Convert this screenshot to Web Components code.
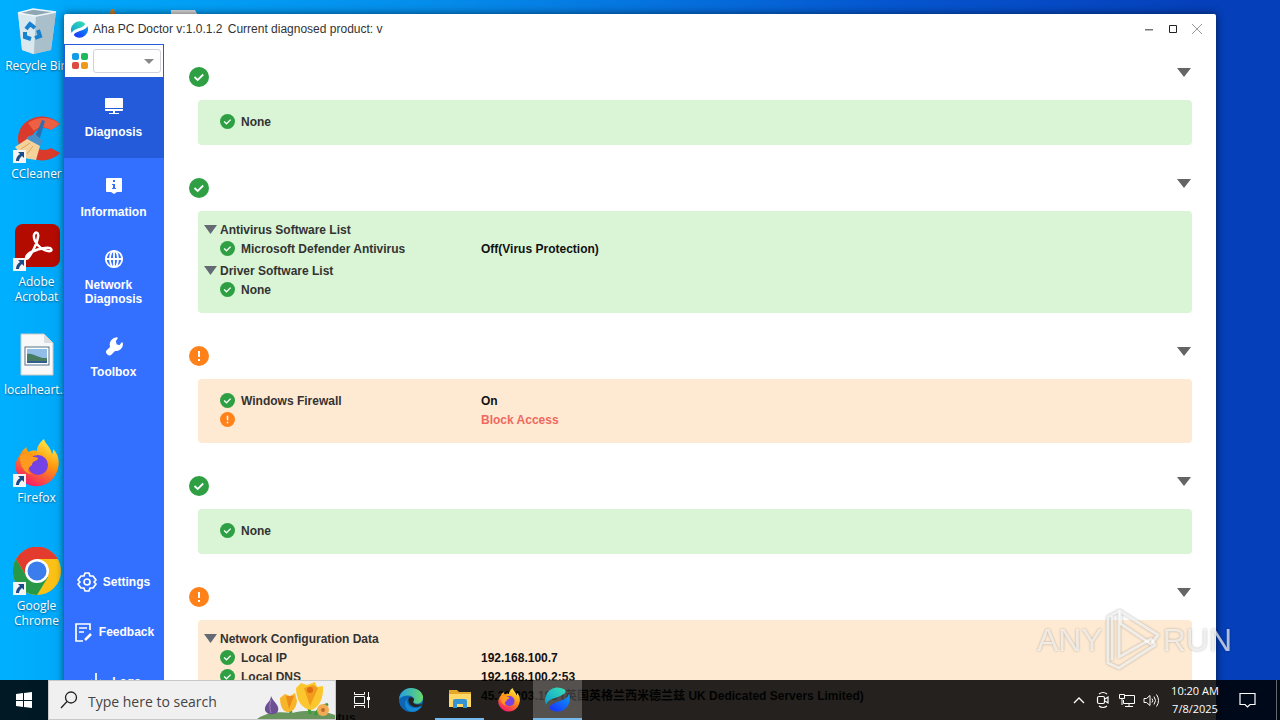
<!DOCTYPE html>
<html lang="en">
<head>
<meta charset="utf-8">
<meta name="viewport" content="width=device-width, initial-scale=1">
<title>Aha PC Doctor</title>
<style>
    html, body {
        height: 100%;
        margin: 0;
        overflow: hidden;
        font-family: "Liberation Sans", "Noto Sans CJK SC", Arial, sans-serif;
        font-size: 12px;
    }
</style>
</head>
<body>
<desk-top>
    <desk-shortcut label="Recycle Bin" plain>
        <svg width="48" height="48" viewBox="0 0 48 48">
            <path d="M5 6l15-4 23 3-5 38-18 4-11-4z" fill="#b9d3e0"/>
            <path d="M5 6l18 3-2 38-12-4z" fill="#d9e7ee"/><path d="M23 9l20-4-5 38-17 4z" fill="#a9bfca"/>
            <path d="M5 6l15-4 23 3-20 4z" fill="#8ea7b3" stroke="#edf6fa" stroke-width="1.500"/>
            <g fill="none" stroke="#1682d0" stroke-width="4"><path d="M13 22l4-5 5 4"/><path d="M25 23l2 6-5 2"/><path d="M18 32l-6-2 0-5"/></g>
        </svg>
    </desk-shortcut>
    <desk-shortcut label="CCleaner">
        <svg width="48" height="48" viewBox="0 0 48 48">
            <path d="M47 9A24 22 0 1 0 47 38l-9-5a12 11 0 1 1 0-18z" fill="#d93a2b"/>
            <path d="M47 9a24 22 0 0 0-32-1l6 8a12 11 0 0 1 17-1z" fill="#ee6044"/>
            <path d="M29 5l3 1-6 20-5-2z" fill="#2f6fae"/><path d="M14 22l8-3 8 7-3 5-14-4z" fill="#4a90c8"/>
            <path d="M2 32l12-8 13 7-4 14-12-2z" fill="#f6d29b"/><path d="M8 34l9-6M14 39l6-8" stroke="#d9a765"/>
        </svg>
    </desk-shortcut>
    <desk-shortcut label="Adobe Acrobat" wrap>
        <svg width="48" height="48" viewBox="0 0 48 48">
            <rect x="2" y="1" width="45" height="43" rx="8" fill="#b30b00"/>
            <path d="M13 35c0-5 11-9 19-10 8-1 8 4 3 3-7-1-15-9-14-16 1-4 5-3 4 2-1 7-7 18-10 21-1 1-2 1-2 0z" fill="none" stroke="#fff" stroke-width="2.500"/>
        </svg>
    </desk-shortcut>
    <desk-shortcut label="localheart..." plain>
        <svg width="48" height="48" viewBox="0 0 48 48">
            <path d="M8 3h23l9 9v32H8z" fill="#f8f8f8" stroke="#c9c9c9"/><path d="M31 3v9h9z" fill="#d9dde0"/>
            <rect x="12" y="16" width="24" height="18" fill="#fff" stroke="#54738c"/>
            <path d="M14 18h20v14H14z" fill="#92bde7"/><path d="M14 23c6-2 12 5 20 4v5H14z" fill="#477c61"/><path d="M14 30h20v2H14z" fill="#325d8c"/>
        </svg>
    </desk-shortcut>
    <desk-shortcut label="Firefox">
        <svg width="48" height="48" viewBox="0 0 48 48">
            <defs><linearGradient id="ff" x1=".8" y1="0" x2=".3" y2="1"><stop offset="0" stop-color="#fff44f"/><stop offset=".45" stop-color="#ff980e"/><stop offset="1" stop-color="#f5156c"/></linearGradient></defs>
            <path d="M31 0c-6 5-7 9-7 12-4-1-7 0-8 1-2-1-3-3-2-5-4 2-6 5-7 8C2 22 1 29 5 36a21 21 0 0 0 36 2c7-10 6-22-1-28 0 3 0 4-1 5-1-7-7-10-8-15z" fill="url(#ff)"/>
            <circle cx="25" cy="26" r="10" fill="#7542e5"/>
            <path d="M7 17c6-4 9-1 13 1 5 0 6 1 4 3-2 1-5 2-5 5-5 3-5 7 0 9-6 1-13-8-12-18z" fill="#ff9a1f"/>
        </svg>
    </desk-shortcut>
    <desk-shortcut label="Google Chrome" wrap>
        <svg width="48" height="48" viewBox="0 0 48 48">
            <circle cx="24" cy="24" r="24" fill="#fbc116"/>
            <path d="M3 12a24 24 0 0 1 42 0H24L14 30z" fill="#e33b2e"/>
            <path d="M3 12a24 24 0 0 0 21 36l11-18H14z" fill="#279847"/>
            <circle cx="24" cy="24" r="12" fill="#fff"/><circle cx="24" cy="24" r="9.500" fill="#3b7ded"/>
        </svg>
    </desk-shortcut>

    <doctor-window slot="window" heading="Aha PC Doctor v:1.0.1.2" product="Current diagnosed product: v">
        <side-bar slot="side">
            <side-item label="Diagnosis" active>
                <svg width="20" height="20" viewBox="0 0 20 20" fill="#fff"><path d="M2 2h16a1 1 0 0 1 1 1v9H1V3a1 1 0 0 1 1-1zM1 13h18v1a1 1 0 0 1-1 1H2a1 1 0 0 1-1-1zM9 15h2v2h4v1H5v-1h4z"/></svg>
            </side-item>
            <side-item label="Information">
                <svg width="20" height="20" viewBox="0 0 20 20"><path d="M3 2h14a1 1 0 0 1 1 1v12a1 1 0 0 1-1 1h-4l-3 2-3-2H3a1 1 0 0 1-1-1V3a1 1 0 0 1 1-1z" fill="#fff"/><path d="M9 4h2v2H9zM8 8h3v4h1v1H8v-1h1V9H8z" fill="#3370ff"/></svg>
            </side-item>
            <side-item label="Network Diagnosis">
                <svg width="20" height="20" viewBox="0 0 20 20" fill="none" stroke="#fff" stroke-width="1.800"><circle cx="10" cy="10" r="8.200"/><ellipse cx="10" cy="10" rx="4" ry="8.200"/><path d="M2 10h16M10 2v16"/></svg>
            </side-item>
            <side-item label="Toolbox">
                <svg width="20" height="20" viewBox="0 0 20 20" fill="#fff"><path d="M13 2l-2 3 1 4 4 1 2-3c1 4-3 8-7 7l-4 4c-2 2-5-1-4-3l4-4C5 6 9 2 13 2z" stroke="#fff" stroke-width="1.500" stroke-linejoin="round"/></svg>
            </side-item>
            <side-item label="Settings" slot="foot" inline>
                <svg width="20" height="20" viewBox="0 0 20 20" fill="none" stroke="#fff" stroke-width="1.700" stroke-linejoin="round"><path d="M8 1h4l1 3 3 0 3 4-2 2 2 2-3 4-3 0-1 3H8l-1-3-3 0-3-4 2-2-2-2 3-4 3 0z"/><circle cx="10" cy="10" r="3"/></svg>
            </side-item>
            <side-item label="Feedback" slot="foot" inline>
                <svg width="20" height="20" viewBox="0 0 20 20" fill="none" stroke="#fff" stroke-width="1.700"><path d="M17 8V2H3v17h7M6 6h8M6 10h5"/><path d="M12 18l6-6" stroke-width="2.500"/></svg>
            </side-item>
            <side-item label="Logs" slot="foot" inline>
                <svg width="20" height="20" viewBox="0 0 20 20" fill="none" stroke="#fff" stroke-width="1.700"><path d="M10 1v12M5 8l5 5 5-5M2 14v4h16v-4"/></svg>
            </side-item>
        </side-bar>

        <check-section status="ok">
            <check-list><check-row status="ok" label="None"></check-row></check-list>
        </check-section>
        <check-section status="ok">
            <check-list heading="Antivirus Software List">
                <check-row status="ok" label="Microsoft Defender Antivirus" value="Off(Virus Protection)"></check-row>
            </check-list>
            <check-list heading="Driver Software List">
                <check-row status="ok" label="None"></check-row>
            </check-list>
        </check-section>
        <check-section status="warn">
            <check-list>
                <check-row status="ok" label="Windows Firewall" value="On"></check-row>
                <check-row status="warn" value="Block Access"></check-row>
            </check-list>
        </check-section>
        <check-section status="ok">
            <check-list><check-row status="ok" label="None"></check-row></check-list>
        </check-section>
        <check-section status="warn">
            <check-list heading="Network Configuration Data">
                <check-row status="ok" label="Local IP" value="192.168.100.7"></check-row>
                <check-row status="ok" label="Local DNS" value="192.168.100.2:53"></check-row>
                <check-row status="ok" value="45.38.203.183 (英国英格兰西米德兰兹 UK Dedicated Servers Limited)"></check-row>
            </check-list>
            <check-list heading="Network Adapter Status"></check-list>
        </check-section>
    </doctor-window>

    <any-run-mark slot="mark"></any-run-mark>
    <task-bar slot="taskbar"></task-bar>
</desk-top>

<script>
const ahaLogo = (size) => `
    <svg width="${size}" height="${size}" viewBox="0 0 24 24" aria-hidden="true">
        <defs>
            <linearGradient id="a" x1="0" y1="1" x2="1" y2="0"><stop offset="0" stop-color="#0a9fd0"/><stop offset="1" stop-color="#3be0b4"/></linearGradient>
            <linearGradient id="b" x1="0" y1="1" x2="1" y2="0"><stop offset="0" stop-color="#1a2cff"/><stop offset="1" stop-color="#0a9df5"/></linearGradient>
        </defs>
        <path d="M1 17A12 12 0 0 1 18 2c3 2 2 4-2 6C11 11 3 11 1 17z" fill="url(#a)"/>
        <path d="M23 7A12 12 0 0 1 6 22c-3-2-2-4 2-6 5-3 13-3 15-9z" fill="url(#b)"/>
    </svg>`;

const statusIcon = (status, size) => status === 'warn'
    ? `<svg width="${size}" height="${size}" viewBox="0 0 20 20" role="img" aria-label="warning"><circle cx="10" cy="10" r="10" fill="#ff811a"/><path d="M9 5h2v6H9zM9 13h2v2H9z" fill="#fff"/></svg>`
    : `<svg width="${size}" height="${size}" viewBox="0 0 20 20" role="img" aria-label="ok"><circle cx="10" cy="10" r="10" fill="#2ea043"/><path d="M5.500 10l3.200 3 5.500-5.500" fill="none" stroke="#fff" stroke-width="1.800"/></svg>`;

class DeskTop extends HTMLElement {
    constructor() {
        super();
        this.attachShadow({ mode: 'open' });
        this.shadowRoot.innerHTML = `
            <style>
                :host {
                    display: block;
                    position: relative;
                    height: 100%;
                    overflow: hidden;
                    background:
                        linear-gradient(to right, #00b0ff 0, #00a8fa 5%, #058bea 35%, #0555cf 70%, #053fb9 95%);
                }
                .icons {
                    display: flex;
                    flex-direction: column;
                    width: 74px;
                }
                .peek {
                    position: absolute;
                    left: 104px;
                    top: 9px;
                }
                slot[name="window"]::slotted(*) {
                    position: absolute;
                    inset: 14px 64px 0 64px;
                }
                slot[name="mark"]::slotted(*) {
                    position: absolute;
                    right: 48px;
                    bottom: 48px;
                }
                slot[name="taskbar"]::slotted(*) {
                    position: absolute;
                    inset: auto 0 0 0;
                }
            </style>
            <svg class="peek" width="100" height="8" aria-hidden="true"><path d="M5 8l2-8h3l2 8z" fill="#d27a1c"/><path d="M67 8V1h24l4 7z" fill="#dcdcdc"/></svg>
            <div class="icons"><slot></slot></div>
            <slot name="window"></slot>
            <slot name="mark"></slot>
            <slot name="taskbar"></slot>
        `;
    }
}
customElements.define('desk-top', DeskTop);

class DeskShortcut extends HTMLElement {
    constructor() {
        super();
        this.attachShadow({ mode: 'open' });
        const arrow = this.hasAttribute('plain') ? '' : `
            <svg class="arrow" width="13" height="13" viewBox="0 0 13 13"><path d="M0 0h13v13H0z" fill="#f4f4f4"/><path d="M5 2h6v6L9 6c-2 2-3 3-3 5H3c0-3 1-5 4-7z" fill="#1c4c86"/></svg>`;
        this.shadowRoot.innerHTML = `
            <style>
                :host {
                    display: block;
                    height: 108px;
                }
                button {
                    display: flex;
                    flex-direction: column;
                    align-items: center;
                    gap: 3px;
                    width: 73px;
                    padding: 7px 0 0;
                    border: 0;
                    background: none;
                    color: #fff;
                    font: 12px/15px "Open Sans", "Noto Sans", sans-serif;
                    text-shadow: 0 1px 2px #0007;
                }
                .pic {
                    display: grid;
                }
                .arrow {
                    grid-area: 1 / 1;
                    place-self: end start;
                    z-index: 1;
                }
                ::slotted(svg) {
                    grid-area: 1 / 1;
                }
                :host([wrap]) .label {
                    max-width: 50px;
                }
            </style>
            <button type="button">
                <span class="pic"><slot></slot>${arrow}</span>
                <span class="label">${this.getAttribute('label')}</span>
            </button>
        `;
    }
}
customElements.define('desk-shortcut', DeskShortcut);

class DoctorWindow extends HTMLElement {
    constructor() {
        super();
        this.attachShadow({ mode: 'open' });
        this.shadowRoot.innerHTML = `
            <style>
                :host {
                    display: grid;
                    grid-template: 30px 1fr / 100px 1fr;
                    overflow: hidden;
                    border-radius: 2px 2px 0 0;
                    background: #fff;
                    color: #333;
                    box-shadow: 0 0 8px #0009;
                }
                header {
                    grid-column: 1 / -1;
                    display: flex;
                    align-items: center;
                    gap: 5px;
                    padding: 0 7px;
                }
                h1 {
                    flex: 1;
                    margin: 0;
                    font-size: 12px;
                    font-weight: normal;
                }
                h1 span {
                    margin-left: 2px;
                }
                .controls {
                    display: flex;
                }
                .controls button {
                    display: grid;
                    place-items: center;
                    width: 24px;
                    height: 24px;
                    padding: 0;
                    border: 0;
                    background: none;
                }
                main {
                    min-height: 0;
                    overflow: hidden;
                    padding: 23px 24px 0 25px;
                }
                slot[name="side"]::slotted(*) {
                    min-height: 0;
                }
            </style>
            <header>
                ${ahaLogo(17)}
                <h1>${this.getAttribute('heading')} <span>${this.getAttribute('product')}</span></h1>
                <div class="controls">
                    <button type="button" aria-label="Minimize"><svg width="10" height="10"><path d="M1 5h8v1.500H1z" fill="#777"/></svg></button>
                    <button type="button" aria-label="Maximize"><svg width="10" height="10"><path d="M1.500 1.500h7v7h-7z" fill="none" stroke="#222"/></svg></button>
                    <button type="button" aria-label="Close"><svg width="12" height="12"><path d="M1 1l10 10M11 1L1 11" stroke="#999"/></svg></button>
                </div>
            </header>
            <slot name="side"></slot>
            <main><slot></slot></main>
        `;
    }
}
customElements.define('doctor-window', DoctorWindow);

class SideBar extends HTMLElement {
    constructor() {
        super();
        this.attachShadow({ mode: 'open' });
        this.shadowRoot.innerHTML = `
            <style>
                :host {
                    display: flex;
                    flex-direction: column;
                    box-sizing: border-box;
                    padding-bottom: 13px;
                    background: #3370ff;
                }
                .pick {
                    display: flex;
                    align-items: center;
                    gap: 5px;
                    box-sizing: border-box;
                    height: 34px;
                    padding: 0 2px 0 7px;
                    border: 1px solid #245bdb;
                    background: #fff;
                }
                .box {
                    display: grid;
                    flex: 1;
                    align-items: center;
                }
                select {
                    grid-area: 1 / 1;
                    appearance: none;
                    width: 100%;
                    height: 24px;
                    border: 1px solid #d0d3d9;
                    border-radius: 3px;
                    background: #fff;
                }
                .box svg {
                    grid-area: 1 / 1;
                    justify-self: end;
                    margin-right: 7px;
                    pointer-events: none;
                }
                nav {
                    display: flex;
                    flex: 1;
                    flex-direction: column;
                }
                .foot {
                    margin-top: auto;
                }
            </style>
            <div class="pick">
                <svg width="16" height="16" viewBox="0 0 16 16" aria-hidden="true"><rect width="7" height="7" rx="2" fill="#129ce8"/><rect x="9" width="7" height="7" rx="2" fill="#1eb85d"/><rect y="9" width="7" height="7" rx="2" fill="#dc4b42"/><rect x="9" y="9" width="7" height="7" rx="2" fill="#eb9a1a"/></svg>
                <div class="box">
                    <select aria-label="Product"><option></option></select>
                    <svg width="10" height="5" aria-hidden="true"><path d="M0 0h10L5 5z" fill="#888"/></svg>
                </div>
            </div>
            <nav>
                <slot></slot>
                <div class="foot"><slot name="foot"></slot></div>
            </nav>
        `;
    }
}
customElements.define('side-bar', SideBar);

class SideItem extends HTMLElement {
    constructor() {
        super();
        this.attachShadow({ mode: 'open' });
        this.shadowRoot.innerHTML = `
            <style>
                :host {
                    display: block;
                    height: 80px;
                }
                :host([active]) {
                    background: #245bdb;
                }
                :host([inline]) {
                    height: 50px;
                }
                button {
                    display: flex;
                    flex-direction: column;
                    align-items: center;
                    justify-content: center;
                    gap: 9px;
                    width: 100%;
                    height: 100%;
                    padding: 0 1px 1px 0;
                    border: 0;
                    background: none;
                    color: #fff;
                    font: bold 12px/14px "Liberation Sans", Arial, sans-serif;
                    text-align: left;
                }
                :host([inline]) button {
                    flex-direction: row;
                    gap: 6px;
                }
                ::slotted(svg) {
                    flex: none;
                }
                .label {
                    width: min-content;
                }
            </style>
            <button type="button"><slot></slot><span class="label">${this.getAttribute('label')}</span></button>
        `;
    }
}
customElements.define('side-item', SideItem);

class CheckSection extends HTMLElement {
    constructor() {
        super();
        this.attachShadow({ mode: 'open' });
        this.shadowRoot.innerHTML = `
            <style>
                :host {
                    display: block;
                    margin-bottom: 33px;
                }
                .head {
                    display: flex;
                    align-items: flex-start;
                    justify-content: space-between;
                    height: 33px;
                }
                button {
                    display: grid;
                    padding: 1px;
                    border: 0;
                    background: none;
                }
                .panel {
                    display: flex;
                    flex-direction: column;
                    gap: 3px;
                    margin-left: 9px;
                    padding: 9px 6px 14px;
                    border-radius: 4px;
                    background: #d9f5d6;
                }
                :host([status="warn"]) .panel {
                    background: #feead2;
                }
            </style>
            <div class="head">
                ${statusIcon(this.getAttribute('status'), 20)}
                <button type="button" aria-label="Collapse"><svg width="14" height="9"><path d="M0 0h14L7 9z" fill="#646464"/></svg></button>
            </div>
            <div class="panel"><slot></slot></div>
        `;
    }
}
customElements.define('check-section', CheckSection);

class CheckList extends HTMLElement {
    constructor() {
        super();
        this.attachShadow({ mode: 'open' });
        const heading = this.getAttribute('heading');
        this.shadowRoot.innerHTML = `
            <style>
                :host {
                    display: block;
                }
                :host(:not([heading])) {
                    padding-top: 3px;
                }
                h2 {
                    display: flex;
                    align-items: center;
                    gap: 3px;
                    height: 19px;
                    margin: 0;
                    color: #333;
                    font-size: 12px;
                    line-height: 20px;
                }
            </style>
            ${heading ? `<h2><svg width="13" height="9" aria-hidden="true"><path d="M0 0h13L6.500 9z" fill="#646a73"/></svg><span>${heading}</span></h2>` : ''}
            <slot></slot>
        `;
    }
}
customElements.define('check-list', CheckList);

class CheckRow extends HTMLElement {
    constructor() {
        super();
        this.attachShadow({ mode: 'open' });
        const status = this.getAttribute('status');
        this.shadowRoot.innerHTML = `
            <style>
                :host {
                    display: grid;
                    grid-template: 19px / 16px 235px 1fr;
                    column-gap: 5px;
                    padding-left: 16px;
                    font-weight: bold;
                    line-height: 21px;
                    white-space: nowrap;
                }
                svg {
                    align-self: center;
                }
                .value {
                    color: #111;
                }
                :host([status="warn"]) .value {
                    color: #f0685f;
                }
            </style>
            ${statusIcon(status, 15)}
            <span>${this.getAttribute('label') || ''}</span>
            <span class="value">${this.getAttribute('value') || ''}</span>
        `;
    }
}
customElements.define('check-row', CheckRow);

class AnyRunMark extends HTMLElement {
    constructor() {
        super();
        this.attachShadow({ mode: 'open' });
        this.shadowRoot.innerHTML = `
            <style>
                :host {
                    display: flex;
                    align-items: center;
                    gap: 2px;
                    color: #ffffffb0;
                    font: 32px/64px "Liberation Sans", sans-serif;
                    filter: drop-shadow(0 0 1px #0006);
                    pointer-events: none;
                }
            </style>
            <span>ANY</span>
            <svg width="56" height="64" viewBox="0 0 56 64" fill="none" stroke="#ffffffc0" stroke-width="3" stroke-linejoin="round" aria-hidden="true"><path d="M15 3l38 24-7 9-30-20z"/><path d="M14 3v46l32-18 4 6-36 23-11-5V9z"/><path d="M7 8v44"/></svg>
            <span>RUN</span>
        `;
    }
}
customElements.define('any-run-mark', AnyRunMark);

class TaskBar extends HTMLElement {
    constructor() {
        super();
        this.attachShadow({ mode: 'open' });
        this.shadowRoot.innerHTML = `
            <style>
                :host {
                    display: flex;
                    height: 40px;
                    background: rgba(0, 0, 0, .86);
                    color: #fff;
                    font: 11px/18px "Open Sans", "Noto Sans", sans-serif;
                }
                button {
                    display: grid;
                    place-items: center;
                    box-sizing: border-box;
                    width: 49px;
                    padding: 0;
                    border: 0;
                    background: none;
                    color: inherit;
                    font: inherit;
                }
                .start {
                    width: 48px;
                }
                .apps {
                    display: flex;
                    padding-left: 1px;
                }
                .open {
                    border-bottom: 2px solid #76b9ed;
                }
                .active {
                    background: #ffffff38;
                }
                .search {
                    display: flex;
                    align-items: center;
                    box-sizing: border-box;
                    width: 288px;
                    padding-left: 11px;
                    border: 1px solid #c8c8c8;
                    background: #f0f0f0;
                }
                input {
                    flex: 1;
                    min-width: 0;
                    height: 22px;
                    margin-left: 10px;
                    padding: 2px 0 0;
                    border: 0;
                    background: none;
                    box-sizing: border-box;
                    font: 14px/20px "Open Sans", "Noto Sans", sans-serif;
                }
                input::placeholder {
                    color: #444;
                }
                .flowers {
                    align-self: flex-end;
                }
                .tray {
                    display: flex;
                    margin-left: auto;
                }
                .tray button {
                    width: 24px;
                }
                .tray .clock {
                    display: block;
                    width: 64px;
                }
                .tray .notes {
                    width: 40px;
                }
                .peek {
                    width: 3px;
                    margin-left: 9px;
                    border-left: 1px solid #666;
                }
            </style>
            <button class="start" type="button" aria-label="Start"><svg width="16" height="16" viewBox="0 0 16 16" fill="#fff"><path d="M0 2l7-1v7H0zM8 1l8-1v8H8zM0 9h7v6l-7-1zM8 9h8v7l-8-1z"/></svg></button>
            <label class="search">
                <svg width="18" height="18" viewBox="0 0 18 18" fill="none" stroke="#222" stroke-width="1.300" aria-hidden="true"><circle cx="11" cy="6.500" r="5.500"/><path d="M7 10.500L1 17"/></svg>
                <input type="text" placeholder="Type here to search" aria-label="Search">
                <svg class="flowers" width="78" height="37" viewBox="0 0 78 37" aria-hidden="true">
                    <path d="M0 37c12-8 24-7 35-6 16-4 32-2 43 2v4z" fill="#69965c"/>
                    <path d="M34 31c-1-7-5-8-8-6M53 32c0-9-5-10-9-13M58 33c4-8 9-9 13-11" stroke="#3b9b38" stroke-width="3" fill="none"/>
                    <path d="M14 14c2 6 9 9 7 15-2 5-12 4-13-1-1-6 6-8 6-14z" fill="#6d5094"/><path d="M14 18c-2 6-1 9 0 13" stroke="#a187bd" fill="none"/>
                    <path d="M23 16l5-4 5 2 5-3 2 8c-1 7-4 11-9 11s-8-6-8-14z" fill="#f9b52a"/><path d="M29 14l3 13 5-13z" fill="#ec8b1a"/>
                    <path d="M39 6l5-5 6 2 8-3 2 5 6-1c1 12-4 22-12 24-9-1-15-10-15-22z" fill="#fcc62f"/><path d="M47 6l6 18 8-18-5-3z" fill="#f29b1d"/><circle cx="53" cy="8" r="3" fill="#de6c13"/>
                    <circle cx="66" cy="28" r="6" fill="#f4ac54"/><circle cx="66" cy="28" r="2" fill="#bd6b2b"/>
                </svg>
            </label>
            <div class="apps">
                <button type="button" aria-label="Task view"><svg width="18" height="18" viewBox="0 0 18 18" fill="none" stroke="#fff"><path d="M1.500 5.500h10v7h-10zM1.500 1v2.500h10V1M1.500 17v-2.500h10V17M15.500 1v16"/><path d="M14 6h3v3h-3z" fill="#fff" stroke="none"/></svg></button>
                <button type="button" aria-label="Edge"><svg width="24" height="24" viewBox="0 0 24 24">
                    <defs><linearGradient id="e" x1="0" x2="1"><stop offset="0" stop-color="#249fe2"/><stop offset="1" stop-color="#67d86b"/></linearGradient></defs>
                    <circle cx="12" cy="12" r="12" fill="#0c66b5"/><path d="M0 11C1 4 6 0 12 0c8 0 13 6 12 11-1 4-5 6-9 4-2-1 1-2 0-4-1-4-9-5-15 0z" fill="url(#e)"/>
                    <path d="M9 10c-3 4 1 11 9 10l5-2c-3 5-8 7-13 5-5-3-5-10-1-13z" fill="#1689d5"/><path d="M10 10c-2 3 1 9 7 9 3 0 5-1 6-3-4 1-8 1-9-2l1-3c-1-2-4-2-5-1z" fill="#25231f"/></svg></button>
                <button class="open" type="button" aria-label="File Explorer"><svg width="22" height="20" viewBox="0 0 22 20"><path d="M0 1h8l2 2h12v5H0z" fill="#e6a829"/><path d="M0 5h22v13H0z" fill="#ffd868"/><path d="M4 19v-7q0-2 2-2h10q2 0 2 2v7h-4v-4H8v4z" fill="#3494d4"/></svg></button>
                <button type="button" aria-label="Firefox"><svg width="24" height="24" viewBox="0 0 48 48">
                    <defs><linearGradient id="f" x1=".8" y1="0" x2=".3" y2="1"><stop offset="0" stop-color="#fff44f"/><stop offset=".45" stop-color="#ff980e"/><stop offset="1" stop-color="#f5156c"/></linearGradient></defs>
                    <path d="M31 0c-6 5-7 9-7 12-4-1-7 0-8 1-2-1-3-3-2-5-4 2-6 5-7 8C2 22 1 29 5 36a21 21 0 0 0 36 2c7-10 6-22-1-28 0 3 0 4-1 5-1-7-7-10-8-15z" fill="url(#f)"/>
                    <circle cx="25" cy="26" r="10" fill="#7542e5"/><path d="M7 17c6-4 9-1 13 1 5 0 6 1 4 3-2 1-5 2-5 5-5 3-5 7 0 9-6 1-13-8-12-18z" fill="#ff9a1f"/></svg></button>
                <button class="open active" type="button" aria-label="Aha PC Doctor">${ahaLogo(25)}</button>
            </div>
            <div class="tray">
                <button type="button" aria-label="Show hidden icons"><svg width="12" height="8" fill="none" stroke="#fff" stroke-width="1.300"><path d="M1 7l5-5 5 5"/></svg></button>
                <button type="button" aria-label="Meet now"><svg width="14" height="18" viewBox="0 0 14 18" fill="none" stroke="#fff" stroke-width="1.200"><rect x="1.500" y="5.500" width="7" height="7" rx="1.500"/><path d="M9 8l3-2v6l-3-2M3 3q4-3 8 0M3 15q4 3 8 0"/></svg></button>
                <button type="button" aria-label="Network"><svg width="17" height="15" viewBox="0 0 17 15" fill="none" stroke="#fff"><path d="M6 2.500h9.500v8h-11V7M10 11v3M6 13.500h8M.500 1.500h5v4h-5zM3 6v6"/></svg></button>
                <button type="button" aria-label="Volume"><svg width="17" height="15" viewBox="0 0 17 15" fill="none" stroke="#fff"><path d="M1 5.500h2.500l3.500-3v10l-3.500-3H1zM9 5.500q1.500 2 0 4M11 3.500q3 4 0 8M13.500 1.500q4 6 0 12"/></svg></button>
                <button class="clock" type="button"><div>10:20 AM</div><div>7/8/2025</div></button>
                <button class="notes" type="button" aria-label="Notifications"><svg width="17" height="17" viewBox="0 0 17 17" fill="none" stroke="#fff" stroke-width="1.200"><path d="M1 1.500h15v11h-5L8.500 15 6 12.500H1z"/></svg></button>
                <span class="peek"></span>
            </div>
        `;
    }
}
customElements.define('task-bar', TaskBar);
</script>
</body>
</html>
